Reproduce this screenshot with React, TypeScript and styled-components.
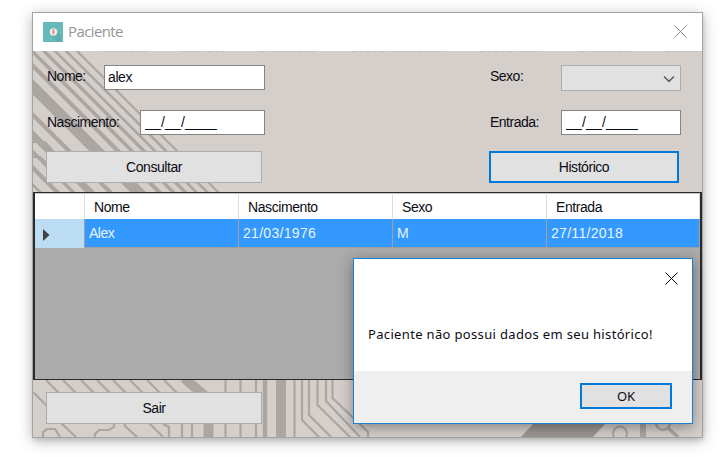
import React from "react";
import styled, { createGlobalStyle } from "styled-components";

const GlobalStyle = createGlobalStyle`
  * { box-sizing: border-box; }
  body {
    margin: 0;
    background: #fff;
    overflow: hidden;
    font-family: "Liberation Sans", Arial, sans-serif;
    font-size: 14px;
    color: #0c0c14;
  }
  button, input { font: inherit; color: inherit; margin: 0; border-radius: 0; }
`;

const Desktop = styled.main`
  width: 723px;
  height: 457px;
  padding: 12px 0 0 32px;
`;

const Window = styled.section`
  position: relative;
  width: 671px;
  height: 426px;
  display: flex;
  flex-direction: column;
  border: 1px solid #a3a3a3;
  background: #fff;
  box-shadow: 0 3px 14px rgba(0, 0, 0, 0.27), 1px 3px 4px rgba(0, 0, 0, 0.1);
`;

const TitleBar = styled.header`
  height: 38px;
  flex: none;
  display: flex;
  align-items: center;
  padding: 0 15px 1px 10px;
`;

const Title = styled.h1`
  flex: 1;
  margin: 0 0 1px 5px;
  font: 400 15px/20px "Open Sans", sans-serif;
  letter-spacing: -0.6px;
  color: #959595;
`;

const Client = styled.div`
  position: relative;
  flex: 1;
  display: flex;
  flex-direction: column;
  background: #d4cfcb;
`;

const Backdrop = styled.svg`
  position: absolute;
  inset: 0;
  pointer-events: none;
`;

const Form = styled.form`
  position: relative;
  height: 141px;
  flex: none;
  display: flex;
  justify-content: space-between;
  padding: 14px 21px 0 13px;
`;

const FieldColumn = styled.div<{ $width: number }>`
  width: ${(p) => p.$width}px;
  display: grid;
  grid-template-rows: 45px 41px 32px;
`;

const Field = styled.label`
  display: flex;
  justify-content: space-between;
  align-items: flex-start;
  letter-spacing: -0.5px;
`;

const Caption = styled.span`
  padding: 3px 0 0 1px;
  line-height: 16px;
`;

const LowCaption = styled(Caption)`
  padding-top: 4px;
`;

const TextBox = styled.input<{ $width: number; $mask?: boolean }>`
  width: ${(p) => p.$width}px;
  height: 25px;
  padding: ${(p) => (p.$mask ? "0 0 1px 4px" : "0 0 1px 3px")};
  border: 1px solid #858585;
  outline: 0;
  background: #fff;
  letter-spacing: ${(p) => (p.$mask ? "0.2px" : "-0.4px")};
`;

const Combo = styled.span`
  width: 120px;
  height: 26px;
  display: flex;
  align-items: center;
  justify-content: flex-end;
  padding: 1px 5px 0 0;
  border: 1px solid #adadad;
  background: #e1e1e1;
`;

const PushButton = styled.button<{ $focused?: boolean; $width: number }>`
  width: ${(p) => p.$width}px;
  height: 32px;
  padding: 0;
  border: ${(p) => (p.$focused ? "2px solid #0078d7" : "1px solid #adadad")};
  background: #e1e1e1;
  letter-spacing: -0.45px;
`;

const DataGrid = styled.div`
  position: relative;
  height: 188px;
  flex: none;
  border: 2px solid #2b2a2a;
  border-width: 1px 2px;
  background: #ababab;
`;

const GridLine = styled.div<{ $selected?: boolean }>`
  display: grid;
  grid-template-columns: 50px 154px 154px 154px 153px;
  height: ${(p) => (p.$selected ? 28 : 26)}px;
  width: 665px;
`;

const HeadCell = styled.div`
  padding: 0 0 0 9px;
  line-height: 26px;
  letter-spacing: -0.42px;
  background: #fff;
  border-top: 1px solid #c8c8c8;
  border-right: 1px solid #dedede;
  border-bottom: 1px solid #a0a0a0;
`;

const Cell = styled.div<{ $numeric: boolean }>`
  padding-left: 4px;
  line-height: 28px;
  letter-spacing: ${(p) => (p.$numeric ? 0.3 : -0.5)}px;
  color: #e9f4ff;
  background: #3399ff;
  border-right: 1px solid #a0a0a0;
  border-bottom: 1px solid #a0a0a0;
`;

const RowMarker = styled.div`
  display: flex;
  align-items: center;
  padding: 2px 0 0 8px;
  background: #bcdcf4;
  border-right: 1px solid #a0a0a0;
`;

const Footer = styled.footer`
  position: relative;
  padding: 12px 0 0 13px;
`;

const Dialog = styled.section`
  position: absolute;
  left: 320px;
  top: 245px;
  width: 340px;
  height: 166px;
  display: flex;
  flex-direction: column;
  border: 1px solid #1c7fd0;
  background: #fff;
  box-shadow: 0 3px 13px rgba(0, 0, 0, 0.38);
  font-family: "Noto Sans", "Open Sans", sans-serif;
  font-size: 13px;
`;

const DialogTop = styled.div`
  display: flex;
  justify-content: flex-end;
  height: 66px;
  padding: 13px 14px 0;
`;

const Message = styled.p`
  margin: 0;
  padding-left: 14px;
  height: 46px;
  line-height: 18px;
  white-space: nowrap;
  letter-spacing: 0.34px;
`;

const DialogActions = styled.div`
  flex: 1;
  display: flex;
  justify-content: flex-end;
  padding: 12px 20px 0 0;
  background: #efefef;
`;

const OkButton = styled(PushButton)`
  height: 26px;
  line-height: 20px;
  letter-spacing: 0;
`;

const diagonals: [number, number][] = [
  [-152, 3], [-135, 5], [-119, 4], [-102, 8], [-82, 5], [-54, 13],
  [-33, 5], [-19, 4], [-7, 4], [4, 3], [15, 3], [26, 2.5],
];

const remnants = [
  [103, 147], [182, 224], [258, 315], [352, 445], [480, 542], [578, 632], [665, 702],
];

function Circuit() {
  return (
    <Backdrop width="669" height="386" viewBox="33 51 669 386" fill="none" stroke="#aba6a2">
      {diagonals.map(([offset, width]) => (
        <line key={offset} x1={offset + 45} y1="45" x2={offset + 200} y2="200" strokeWidth={width * 0.85} />
      ))}
      <g strokeWidth="2.2">
        <path d="M33 142H45L54 152M33 157H40L47 163M33 169L52 188" />
        <path d="M46 380L62 396M63 380L79 396M81 380L97 396M97 380L113 396M113 380L129 396M130 380L146 396M147 380L163 396M164 380L180 396M33 392L47 406M61 423L76 437" />
        <path d="M43 437V432L47 429H55L60 437M95 437V434L99 430H109L114 427V422M125 423V426L137 437M148 422L163 437M163 424L169 427V437" />
        <path d="M182 422V437M192 422V437M225.5 380V437M240.5 380V437M256 380V437M294.500 380V437" />
        <path d="M302 380V420L319 437M309 380V415L331 437M317.500 380V405L350 437M326 380V401L360 437M332.500 380V398L368 432V437" />
      </g>
      <path d="M184 378L205 396" strokeWidth="10" />
      <path d="M208.500 422V437M281 380V437" strokeWidth="10" />
      <path d="M265 380V437" strokeWidth="4.500" />
      <path d="M533 424H605L593 437H521Z" fill="#9b9693" stroke="none" />
      <circle cx="620" cy="433.500" r="7" strokeWidth="2" />
      <path d="M643 423V437" strokeWidth="6" />
      <circle cx="663" cy="423" r="7" strokeWidth="2.500" />
      <path d="M668 428L678 437" strokeWidth="3.500" />
      {remnants.map(([from, to]) => (
        <path key={from} d={`M${from} 51.500H${to}`} stroke="#c5c0bc" strokeWidth="1" strokeDasharray="6 2 3 2" />
      ))}
    </Backdrop>
  );
}

function CloseIcon({ color }: { color: string }) {
  return (
    <svg width="13" height="13" viewBox="0 0 13 13" stroke={color} strokeWidth="1">
      <path d="M.5.5L12.500 12.500M12.500.5L.5 12.500" />
    </svg>
  );
}

function AppIcon() {
  return (
    <svg width="20" height="20" viewBox="0 0 20 20">
      <rect width="20" height="20" fill="#65bbb9" />
      <path d="M8 13L13 8L18 14V20H14Z" fill="#5bb0ae" />
      <circle cx="10.500" cy="10" r="3.700" fill="#eef1ef" />
      <path d="M10.500 7V12.500M9.300 10H11.500" stroke="#e77f83" strokeWidth="1.500" />
    </svg>
  );
}

const columns = ["Nome", "Nascimento", "Sexo", "Entrada"];
const patient = ["Alex", "21/03/1976", "M", "27/11/2018"];

export default function App() {
  return (
    <Desktop>
      <GlobalStyle />
      <Window>
        <TitleBar>
          <AppIcon />
          <Title>Paciente</Title>
          <CloseIcon color="#858585" />
        </TitleBar>
        <Client>
          <Circuit />
          <Form onSubmit={(e) => e.preventDefault()}>
            <FieldColumn $width={219}>
              <Field>
                <Caption>Nome:</Caption>
                <TextBox $width={161} defaultValue="alex" />
              </Field>
              <Field>
                <LowCaption>Nascimento:</LowCaption>
                <TextBox $width={125} $mask defaultValue="__/__/____" />
              </Field>
              <PushButton $width={216}>Consultar</PushButton>
            </FieldColumn>
            <FieldColumn $width={192}>
              <Field>
                <Caption>Sexo:</Caption>
                <Combo>
                  <svg width="12" height="8" viewBox="0 0 12 8" fill="none" stroke="#606060" strokeWidth="1.600">
                    <path d="M1 1.500L6 6.300L11 1.500" />
                  </svg>
                </Combo>
              </Field>
              <Field>
                <LowCaption>Entrada:</LowCaption>
                <TextBox $width={120} $mask defaultValue="__/__/____" />
              </Field>
              <PushButton $focused $width={190}>Histórico</PushButton>
            </FieldColumn>
          </Form>
          <DataGrid>
            <GridLine>
              <HeadCell />
              {columns.map((name) => <HeadCell key={name}>{name}</HeadCell>)}
            </GridLine>
            <GridLine $selected>
              <RowMarker>
                <svg width="7" height="12" viewBox="0 0 7 12"><path d="M0 0L6.500 6L0 12Z" fill="#404040" /></svg>
              </RowMarker>
              {patient.map((value) => (
                <Cell key={value} $numeric={value.includes("/")}>{value}</Cell>
              ))}
            </GridLine>
          </DataGrid>
          <Footer>
            <PushButton $width={216}>Sair</PushButton>
          </Footer>
        </Client>
        <Dialog role="dialog">
          <DialogTop><CloseIcon color="#000" /></DialogTop>
          <Message>Paciente não possui dados em seu histórico!</Message>
          <DialogActions><OkButton $focused $width={92}>OK</OkButton></DialogActions>
        </Dialog>
      </Window>
    </Desktop>
  );
}
